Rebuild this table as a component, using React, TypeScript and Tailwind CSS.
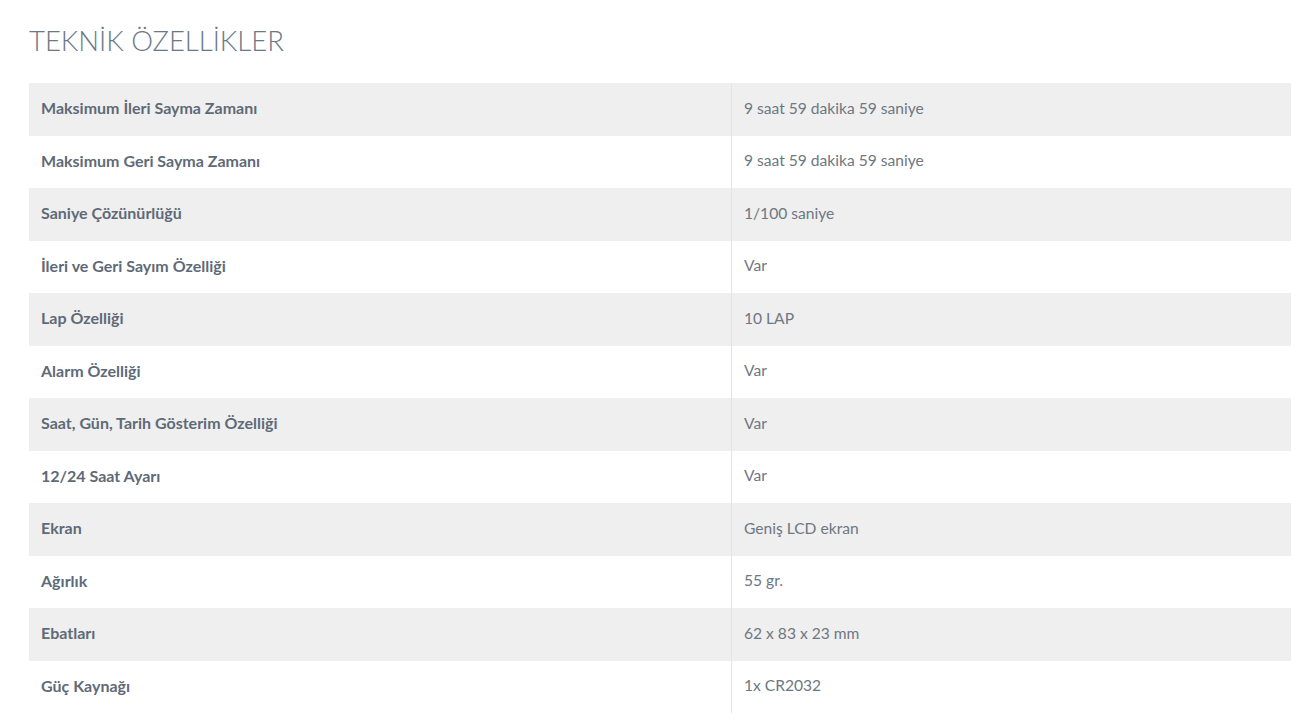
const rows: [string, string][] = [
  ["Maksimum İleri Sayma Zamanı", "9 saat 59 dakika 59 saniye"],
  ["Maksimum Geri Sayma Zamanı", "9 saat 59 dakika 59 saniye"],
  ["Saniye Çözünürlüğü", "1/100 saniye"],
  ["İleri ve Geri Sayım Özelliği", "Var"],
  ["Lap Özelliği", "10 LAP"],
  ["Alarm Özelliği", "Var"],
  ["Saat, Gün, Tarih Gösterim Özelliği", "Var"],
  ["12/24 Saat Ayarı", "Var"],
  ["Ekran", "Geniş LCD ekran"],
  ["Ağırlık", "55 gr."],
  ["Ebatları", "62 x 83 x 23 mm"],
  ["Güç Kaynağı", "1x CR2032"],
]

export default function App() {
  return (
    <div className="min-h-screen bg-white px-[29px] pt-[22px] font-['Lato',sans-serif]">
      <h2 className="text-[27.5px] font-light leading-[38px] text-[#6a7886]">
        TEKNİK ÖZELLİKLER
      </h2>
      <div className="mt-[23px] w-[1262px]">
        {rows.map(([label, value], i) => (
          <div
            key={label}
            className={
              i % 2 === 0
                ? "flex h-[52.5px] items-center bg-[#efefef]"
                : "flex h-[52.5px] items-center bg-white"
            }
          >
            <div className="w-[702px] pb-[2px] pl-[12px] text-[16px] font-bold text-[#5e6a77]">{label}</div>
            <div className="flex h-full items-center border-l border-[#e4e4e4] pb-[2px] pl-[12px] text-[15.6px] text-[#6e7782]">
              {value}
            </div>
          </div>
        ))}
      </div>
    </div>
  )
}
